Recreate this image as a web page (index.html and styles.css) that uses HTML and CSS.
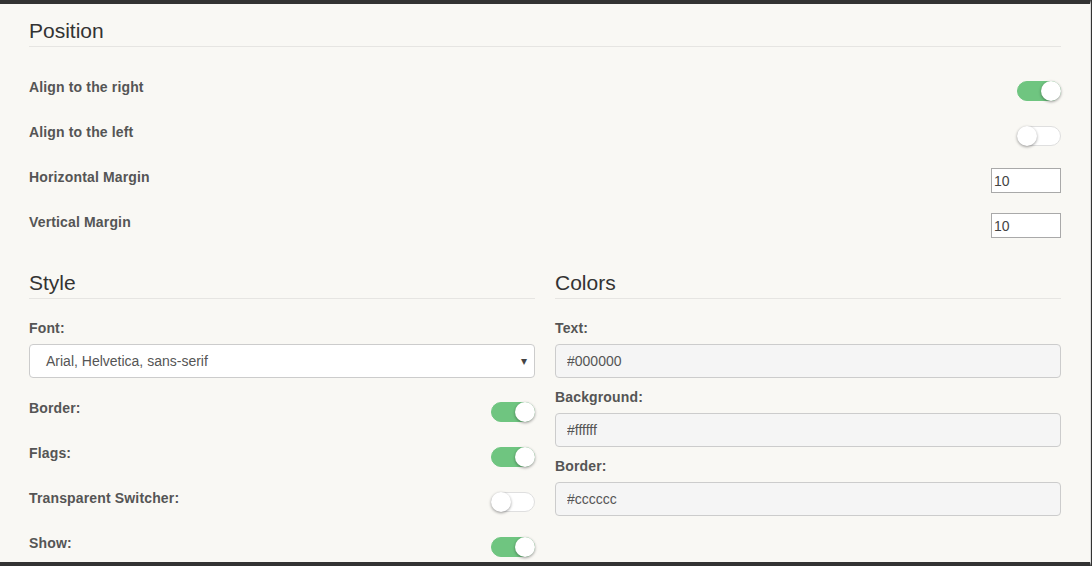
FILE: index.html
```html
<!DOCTYPE html>
<html>
<head>
    <title>Switcher Settings</title>
    <link rel="stylesheet" href="styles.css">
</head>
<body>
    <div class="frame">
        <div class="settings">
            <section class="panel">
                <h3 class="panel-title">Position</h3>
                <div class="panel-body rows">
                    <div class="row">
                        <label>Align to the right</label>
                        <span class="switch on"></span>
                    </div>
                    <div class="row">
                        <label>Align to the left</label>
                        <span class="switch"></span>
                    </div>
                    <div class="row">
                        <label>Horizontal Margin</label>
                        <input class="num" type="text" value="10">
                    </div>
                    <div class="row">
                        <label>Vertical Margin</label>
                        <input class="num" type="text" value="10">
                    </div>
                </div>
            </section>

            <div class="columns">
                <section class="panel">
                    <h3 class="panel-title">Style</h3>
                    <div class="panel-body">
                        <div class="field">
                            <label>Font:</label>
                            <div class="select">
                                <span>Arial, Helvetica, sans-serif</span>
                            </div>
                        </div>
                        <div class="rows">
                            <div class="row">
                                <label>Border:</label>
                                <span class="switch on"></span>
                            </div>
                            <div class="row">
                                <label>Flags:</label>
                                <span class="switch on"></span>
                            </div>
                            <div class="row">
                                <label>Transparent Switcher:</label>
                                <span class="switch"></span>
                            </div>
                            <div class="row">
                                <label>Show:</label>
                                <span class="switch on"></span>
                            </div>
                        </div>
                    </div>
                </section>

                <section class="panel">
                    <h3 class="panel-title">Colors</h3>
                    <div class="panel-body">
                        <div class="field">
                            <label>Text:</label>
                            <input class="color" type="text" value="#000000">
                        </div>
                        <div class="field">
                            <label>Background:</label>
                            <input class="color" type="text" value="#ffffff">
                        </div>
                        <div class="field">
                            <label>Border:</label>
                            <input class="color" type="text" value="#cccccc">
                        </div>
                    </div>
                </section>
            </div>
        </div>
    </div>
</body>
</html>
```

FILE: styles.css
```css
body {
    margin: 0;
    font-family: "Liberation Sans", Arial, sans-serif;
    background-color: #333;
}

.frame {
    width: 1090px;
    height: 558px;
    border-top: 4px solid #333;
    border-bottom: 4px solid #333;
    border-right: 1px solid #dcdcdc;
    background-color: #f9f8f4;
    overflow: hidden;
}

.settings {
    padding: 0 29px;
}

.panel-title {
    margin: 16px 0 0;
    padding-bottom: 4px;
    font-size: 21px;
    line-height: 22px;
    font-weight: normal;
    color: #333;
    border-bottom: 1px solid #e6e5e2;
}

.columns {
    display: flex;
    gap: 20px;
    margin-top: 8px;
}

.columns .panel {
    flex: 1;
}

.panel-body {
    padding-top: 21px;
}

.columns .panel-body {
    padding-top: 20px;
}

.field + .rows {
    margin-top: 11px;
}

.row {
    display: flex;
    justify-content: space-between;
    align-items: center;
    height: 45px;
}

label {
    display: block;
    font-size: 14px;
    line-height: 18px;
    font-weight: bold;
    letter-spacing: 0.15px;
    color: #555;
}

.row label {
    margin-bottom: 8px;
}

.field label {
    margin-bottom: 7px;
}

.field + .field {
    margin-top: 10px;
}

.switch {
    position: relative;
    display: block;
    width: 44px;
    height: 20px;
    box-sizing: border-box;
    border-radius: 10px;
    border: 1px solid #dfdfdf;
    background-color: #fff;
}

.switch::after {
    content: "";
    position: absolute;
    top: -1px;
    left: -1px;
    width: 20px;
    height: 20px;
    border-radius: 50%;
    background-color: #fff;
    box-shadow: 0 1px 3px rgba(0, 0, 0, 0.4);
}

.switch.on {
    background-color: #6fc580;
    border-color: #6fc580;
}

.switch.on::after {
    left: 23px;
}

.num {
    width: 70px;
    height: 25px;
    box-sizing: border-box;
    margin: 0;
    padding: 1px 2px;
    border: 1px solid #a9a9a9;
    background-color: #fff;
    font-family: "Liberation Sans", Arial, sans-serif;
    font-size: 14px;
    color: #444;
}

.select {
    position: relative;
    height: 34px;
    box-sizing: border-box;
    padding: 0 16px;
    border: 1px solid #ccc;
    border-radius: 4px;
    background-color: #fff;
    font-size: 14px;
    line-height: 32px;
    color: #555;
}

.select::after {
    content: "\25BE";
    position: absolute;
    right: 7px;
    top: 0;
    font-size: 12px;
    color: #444;
}

.color {
    display: block;
    width: 100%;
    height: 34px;
    box-sizing: border-box;
    margin: 0;
    padding: 0 11px;
    border: 1px solid #ccc;
    border-radius: 4px;
    background-color: #f5f5f5;
    font-family: "Liberation Sans", Arial, sans-serif;
    font-size: 14px;
    color: #555;
}
```
